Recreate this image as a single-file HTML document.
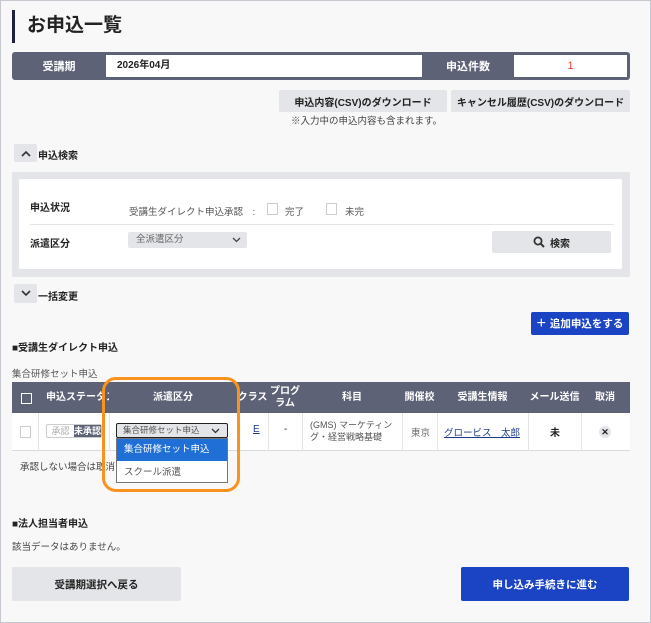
<!DOCTYPE html>
<html><head><meta charset="utf-8"><style>
*{box-sizing:border-box;margin:0;padding:0}
body{width:651px;height:623px;background:#f8f8f8;font-family:"Liberation Sans","Noto Sans CJK JP",sans-serif;color:#222;position:relative;overflow:hidden;font-size:11px}
.frame{position:absolute;left:0;top:0;width:651px;height:623px;border:1px solid #c5c9cf}
.a{position:absolute}
.c{display:flex;align-items:center;justify-content:center}
.b{font-weight:bold}
.th{position:absolute;top:382px;height:31px;color:#fff;font-weight:bold;font-size:10px;display:flex;align-items:center;justify-content:center;text-align:center;line-height:12px}
.vl{position:absolute;top:413px;height:38px;width:1px;background:#e3e4e8}
</style></head><body>
<div class="frame"></div>
<div class="a" style="left:12px;top:10px;width:3px;height:33px;background:#1e2140"></div>
<div class="a b" style="left:27px;top:12px;font-size:19px;line-height:28px;color:#222">お申込一覧</div>

<div class="a" style="left:12px;top:52px;width:618px;height:28px;background:#5d6276;border-radius:3px"></div>
<div class="a c b" style="left:12px;top:52px;width:94px;height:28px;color:#fff">受講期</div>
<div class="a" style="left:106px;top:55px;width:316px;height:22px;background:#fff;padding-left:11px;line-height:22px;font-weight:bold;font-size:10px">2026年04月</div>
<div class="a c b" style="left:422px;top:52px;width:92px;height:28px;color:#fff">申込件数</div>
<div class="a c" style="left:514px;top:55px;width:113px;height:22px;background:#fff;color:#e53b2c">1</div>

<div class="a c b" style="left:279px;top:90px;width:168px;height:22px;background:#e4e5e8;border-radius:2px;font-size:10px">申込内容(CSV)のダウンロード</div>
<div class="a c b" style="left:451px;top:90px;width:179px;height:22px;background:#e4e5e8;border-radius:2px;font-size:10px">キャンセル履歴(CSV)のダウンロード</div>
<div class="a" style="left:291px;top:115px;font-size:9.5px;color:#444;line-height:14px">※入力中の申込内容も含まれます。</div>

<div class="a c" style="left:14px;top:144px;width:23px;height:18px;background:#e4e5e8;border-radius:2px"><svg width="10" height="7"><path d="M1 6 L5 2 L9 6" stroke="#333" stroke-width="1.6" fill="none"/></svg></div>
<div class="a b" style="left:38px;top:147px;font-size:10px">申込検索</div>

<div class="a" style="left:12px;top:172px;width:618px;height:105px;background:#e4e5e8;border-radius:2px"></div>
<div class="a" style="left:19px;top:179px;width:603px;height:90px;background:#fff;border-radius:2px"></div>
<div class="a b" style="left:30px;top:199px;font-size:10px">申込状況</div>
<div class="a" style="left:129px;top:204px;font-size:9.5px;color:#555">受講生ダイレクト申込承認　:</div>
<div class="a" style="left:267px;top:203px;width:11px;height:12px;border:1px solid #ccc"></div>
<div class="a" style="left:285px;top:204px;font-size:9.5px;color:#555">完了</div>
<div class="a" style="left:326px;top:203px;width:11px;height:12px;border:1px solid #ccc"></div>
<div class="a" style="left:345px;top:204px;font-size:9.5px;color:#555">未完</div>
<div class="a" style="left:30px;top:224px;width:584px;height:1px;background:#e3e4e8"></div>
<div class="a b" style="left:30px;top:235px;font-size:10px">派遣区分</div>
<div class="a" style="left:128px;top:232px;width:119px;height:16px;background:#e4e5e8;border-radius:2px;font-size:9.5px;color:#666;padding-left:8px;line-height:16px">全派遣区分<svg class="a" style="right:6px;top:5px" width="9" height="6"><path d="M1 1 L4.5 4.5 L8 1" stroke="#444" stroke-width="1.3" fill="none"/></svg></div>
<div class="a c b" style="left:492px;top:231px;width:119px;height:22px;background:#e4e5e8;border-radius:2px;font-size:10px"><svg width="12" height="12" style="margin-right:5px"><circle cx="5" cy="5" r="3.6" stroke="#333" stroke-width="1.8" fill="none"/><path d="M7.6 7.6 L11 11" stroke="#333" stroke-width="2"/></svg>検索</div>

<div class="a c" style="left:14px;top:284px;width:23px;height:19px;background:#e4e5e8;border-radius:2px"><svg width="10" height="7"><path d="M1 1 L5 5 L9 1" stroke="#333" stroke-width="1.6" fill="none"/></svg></div>
<div class="a b" style="left:38px;top:288px;font-size:10px">一括変更</div>

<div class="a c b" style="left:531px;top:312px;width:98px;height:23px;background:#1a44c4;border-radius:2px;color:#fff;font-size:10.5px"><span style="font-size:16px;font-weight:normal;margin-right:4px;line-height:10px">+</span>追加申込をする</div>
<div class="a b" style="left:12px;top:339px;font-size:10px">■受講生ダイレクト申込</div>
<div class="a" style="left:12px;top:366px;font-size:9.5px;color:#555">集合研修セット申込</div>

<div class="a" style="left:12px;top:382px;width:618px;height:31px;background:#5d6276"></div>
<div class="a" style="left:21px;top:393px;width:11px;height:11px;border:1.5px solid #fff"></div>
<div class="th" style="left:38px;width:71px;justify-content:flex-start;padding-left:8px;overflow:hidden;white-space:nowrap">申込ステータス</div>
<div class="th" style="left:109px;width:128px">派遣区分</div>
<div class="th" style="left:237px;width:31px">クラス</div>
<div class="th" style="left:268px;width:34px">プログ<br>ラム</div>
<div class="th" style="left:302px;width:100px">科目</div>
<div class="th" style="left:402px;width:35px">開催校</div>
<div class="th" style="left:437px;width:91px">受講生情報</div>
<div class="th" style="left:528px;width:53px">メール送信</div>
<div class="th" style="left:581px;width:48px">取消</div>
<div class="a" style="left:12px;top:413px;width:618px;height:38px;background:#fff;border-bottom:1px solid #d9dbe0"></div>
<div class="vl" style="left:38px"></div><div class="vl" style="left:109px"></div><div class="vl" style="left:237px"></div><div class="vl" style="left:268px"></div><div class="vl" style="left:302px"></div><div class="vl" style="left:402px"></div><div class="vl" style="left:437px"></div><div class="vl" style="left:528px"></div><div class="vl" style="left:581px"></div>
<div class="a" style="left:20px;top:426px;width:11px;height:12px;border:1px solid #ccc"></div>
<div class="a" style="left:46px;top:424px;width:56px;height:14px;border:1px solid #ccc;border-radius:2px;display:flex;font-size:9px;line-height:12px"><span style="width:27px;color:#aaa;text-align:center">承認</span><span style="flex:1;background:#5d6276;color:#fff;font-weight:bold;text-align:center;overflow:hidden">未承認</span></div>
<div class="a" style="left:253px;top:424px;font-size:10px;color:#1e3a8a;text-decoration:underline">E</div>
<div class="a" style="left:284px;top:424px;font-size:10px">-</div>
<div class="a" style="left:310px;top:419px;font-size:9px;color:#555;line-height:12px">(GMS) マーケティン<br>グ・経営戦略基礎</div>
<div class="a" style="left:411px;top:425px;font-size:9.5px;color:#666">東京</div>
<div class="a" style="left:444px;top:425px;font-size:9.5px;color:#1e3a8a;text-decoration:underline">グロービス　太郎</div>
<div class="a b" style="left:550px;top:424px;font-size:10px">未</div>
<div class="a c" style="left:599px;top:426px;width:12px;height:12px;border-radius:50%;background:#e4e5e8;font-size:9px;font-weight:bold">✕</div>
<div class="a" style="left:20px;top:459px;font-size:9.5px;color:#444">承認しない場合は取消</div>

<div class="a" style="left:116px;top:423px;width:112px;height:15px;background:#e4e5e8;border:1.5px solid #222;border-radius:2px;font-size:8.5px;color:#555;padding-left:6px;line-height:12px">集合研修セット申込<svg class="a" style="right:7px;top:4px" width="9" height="6"><path d="M1 1 L4.5 4.5 L8 1" stroke="#333" stroke-width="1.3" fill="none"/></svg></div>
<div class="a" style="left:116px;top:438px;width:112px;height:45px;background:#fff;border:1px solid #777"></div>
<div class="a" style="left:117px;top:439px;width:110px;height:22px;background:#1f6fd6;color:#fff;font-size:9.5px;padding-left:7px;line-height:22px">集合研修セット申込</div>
<div class="a" style="left:124px;top:464px;font-size:9.5px;color:#555">スクール派遣</div>
<div class="a" style="left:102px;top:377px;width:138px;height:115px;border:3px solid #f7931e;border-radius:14px"></div>

<div class="a b" style="left:12px;top:515px;font-size:10px">■法人担当者申込</div>
<div class="a" style="left:12px;top:539px;font-size:9.5px;color:#444">該当データはありません。</div>
<div class="a c b" style="left:12px;top:567px;width:169px;height:34px;background:#e4e5e8;border-radius:2px;font-size:10.5px">受講期選択へ戻る</div>
<div class="a c b" style="left:461px;top:567px;width:168px;height:34px;background:#1a44c4;border-radius:2px;color:#fff;font-size:10.5px">申し込み手続きに進む</div>
</body></html>
